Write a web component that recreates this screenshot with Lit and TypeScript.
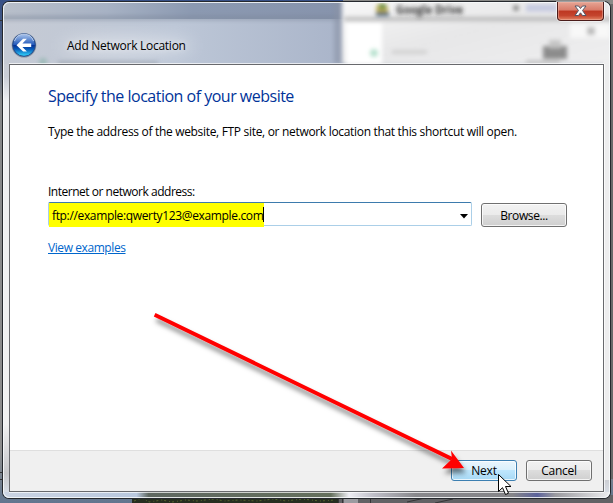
import { LitElement, html, css } from "lit";
import { customElement } from "lit/decorators.js";

@customElement("app-root")
export class AppRoot extends LitElement {
  static styles = css`
    :host {
      display: block;
      position: relative;
      width: 613px;
      height: 503px;
      overflow: hidden;
      font-family: "Open Sans", "Noto Sans", sans-serif;
      font-size: 12px;
      color: #000;
    }
    * { box-sizing: border-box; }
    svg { display: block; }
    .backdrop, .arrow { position: absolute; left: 0; top: 0; pointer-events: none; }
    .window {
      position: relative;
      width: 607px;
      height: 496px;
      margin: 2px 0 0 3px;
      display: flex;
      flex-direction: column;
      padding: 0 6px;
    }
    .bar { height: 62px; display: flex; align-items: flex-start; }
    .back { margin: 30px 0 0 2px; }
    .title {
      margin: 35px 0 0 30px;
      line-height: 18px;
      letter-spacing: -0.27px;
      white-space: nowrap;
      text-shadow: 0 0 6px #ffffffb0;
    }
    .close {
      margin: 0 0 0 auto;
      padding: 0;
      width: 47px;
      height: 19px;
      border: 1px solid #4b1c1a;
      border-top: 0;
      border-radius: 0 0 4px 4px;
      background: linear-gradient(#e6a595 0, #d87b69 45%, #bd3722 50%, #c4442d 75%, #e28263 100%);
      box-shadow: inset 0 0 0 1px #f0b7a880, 0 0 0 1px #ffffff90;
      display: flex;
      justify-content: center;
      padding-top: 3px;
    }
    .client {
      height: 428px;
      border: 1px solid #68696d;
      background: #fff;
      display: flex;
      flex-direction: column;
    }
    .page { flex: 1; padding: 19px 35px 0 38px; display: flex; flex-direction: column; align-items: flex-start; }
    h1 { margin: 0; font-size: 16px; font-weight: 400; line-height: 24px; color: #003399; white-space: nowrap; letter-spacing: -0.5px; }
    .desc { margin: 15px 0 0; line-height: 18px; white-space: nowrap; letter-spacing: -0.315px; }
    label { margin-top: 42px; line-height: 18px; white-space: nowrap; letter-spacing: -0.48px; }
    .row { display: flex; align-items: flex-start; gap: 9px; margin-top: 1px; }
    .combo {
      width: 424px;
      height: 24px;
      border: 1px solid #abcfe8;
      border-top-color: #3d7bad;
      border-radius: 2px;
      display: flex;
      align-items: flex-start;
      justify-content: space-between;
    }
    .value {
      width: 215px;
      height: 24px;
      padding-left: 3px;
      line-height: 25px;
      background: #ff0;
      white-space: nowrap;
      letter-spacing: -0.35px;
      position: relative;
    }
    .caret { position: absolute; right: 0; top: 4px; width: 1px; height: 15px; background: #000; }
    .drop { margin: 11px 3px 0 0; }
    button { font: inherit; color: #000; }
    .btn {
      padding: 0;
      border: 1px solid #707070;
      border-radius: 3px;
      background: linear-gradient(#f2f2f2 0, #ebebeb 48%, #dddddd 50%, #cfcfcf 100%);
      box-shadow: inset 0 0 0 1px #ffffffc0;
      width: 66px;
      height: 21px;
      line-height: 20px;
      text-align: center;
      letter-spacing: -0.25px;
    }
    .browse { width: 86px; height: 24px; line-height: 23px; margin-top: 1px; letter-spacing: -0.4px; }
    .next {
      border-color: #3c7fb1;
      background: linear-gradient(#eaf6fd 0, #d9f0fc 48%, #bee6fd 50%, #a7d9f5 100%);
    }
    .link { margin-top: 12px; line-height: 18px; color: #0066cc; text-decoration: underline; letter-spacing: -0.42px; white-space: nowrap; }
    .footer {
      height: 41px;
      border-top: 1px solid #dfdfdf;
      background: #f0f0f0;
      display: flex;
      justify-content: flex-end;
      gap: 9px;
      padding: 9px 11px 0 0;
    }
  `;

  private backdrop() {
    return html`<svg class="backdrop" width="613" height="503" viewBox="0 0 613 503">
      <defs>
        <filter id="soft" x="-20%" y="-50%" width="140%" height="200%"><feGaussianBlur stdDeviation="2" /></filter>
        <filter id="edge" filterUnits="userSpaceOnUse" x="-20" y="-20" width="660" height="120"><feGaussianBlur stdDeviation="2" /></filter>
        <filter id="wide" x="-20%" y="-60%" width="140%" height="220%"><feGaussianBlur stdDeviation="8" /></filter>
        <clipPath id="frame"><rect x="3" y="2" width="607" height="496" rx="6" /></clipPath>
        <linearGradient id="desk" x1="0" y1="0" x2="0" y2="1">
          <stop offset="0" stop-color="#365087" /><stop offset=".12" stop-color="#56647f" />
          <stop offset=".2" stop-color="#858789" /><stop offset=".9" stop-color="#8d8d8d" />
          <stop offset="1" stop-color="#61758f" />
        </linearGradient>
        <linearGradient id="top" x1="0" x2="1">
          <stop offset="0" stop-color="#b8bfca" /><stop offset=".3" stop-color="#a7b2c4" />
          <stop offset=".55" stop-color="#8b99b1" /><stop offset="1" stop-color="#8693ac" />
        </linearGradient>
        <linearGradient id="lower" x1="0" x2="1">
          <stop offset="0" stop-color="#c5cad4" /><stop offset=".5" stop-color="#bdc7d7" />
          <stop offset="1" stop-color="#a9b4c9" />
        </linearGradient>
        <linearGradient id="side" x1="0" y1="0" x2="0" y2="1">
          <stop offset="0" stop-color="#c5cad4" /><stop offset=".15" stop-color="#c9cdd6" /><stop offset=".2" stop-color="#eeeff1" />
          <stop offset=".85" stop-color="#f1f1f1" /><stop offset=".95" stop-color="#c7c7ca" />
          <stop offset="1" stop-color="#dce3ed" />
        </linearGradient>
        <linearGradient id="base" x1="0" x2="1">
          <stop offset="0" stop-color="#cbd4e3" /><stop offset=".22" stop-color="#b9c8de" />
          <stop offset=".24" stop-color="#5f6861" /><stop offset=".54" stop-color="#65705d" />
          <stop offset=".57" stop-color="#eeeef4" /><stop offset=".61" stop-color="#bfbfc9" />
          <stop offset=".68" stop-color="#88888c" /><stop offset=".84" stop-color="#858589" />
          <stop offset=".88" stop-color="#5b629b" /><stop offset=".91" stop-color="#9b9ba0" />
          <stop offset="1" stop-color="#ededf0" />
        </linearGradient>
        <linearGradient id="grey" x1="0" y1="0" x2="1" y2="1">
          <stop offset="0" stop-color="#fafafa" /><stop offset=".5" stop-color="#e7e7e8" /><stop offset="1" stop-color="#efeff0" />
        </linearGradient>
      </defs>
      <rect width="613" height="503" fill="url(#desk)" />
      <rect x="343" width="270" height="6" fill="#8a8a88" />
      <path d="M0 20.500H3M0 472.500H3M0 479.500H3" stroke="#333" />
      <rect x="609" y="4" width="4" height="475" fill="#696969" />
      <rect x="132" y="495" width="206" height="8" fill="#262e20" />
      <path d="M134 501l8-3 7 4 13-2 10 2 14-2 11 1 17-2 10 2 15-1 18 1 17-2 12 2 16-2 18 2 16-1" fill="none" stroke="#55632e" stroke-dasharray="2 3 1 2" />
      <rect x="338" y="495" width="275" height="8" fill="#626265" />
      <rect x="344" y="498" width="14" height="5" fill="#9b9ba0" />
      <path d="M338.500 498v5M342.500 498v5M370.500 498v5M407 502l18-4m10 5l18-4" stroke="#353537" />
      <rect x="2" y="1" width="609" height="498" rx="7" fill="#25282d" />
      <g clip-path="url(#frame)">
        <rect x="3" y="2" width="607" height="496" fill="url(#side)" />
        <rect x="603" y="60" width="7" height="420" fill="#ededee" />
        <rect x="3" y="2" width="345" height="18" fill="url(#top)" />
        <rect x="3" y="19" width="345" height="45" fill="url(#lower)" />
        <rect x="-10" y="16" width="355" height="4" fill="#7c8698" opacity=".55" filter="url(#edge)" />
        <rect x="334" y="-10" width="12" height="74" fill="#8992a5" opacity=".6" filter="url(#edge)" />
        <rect x="342" y="-10" width="290" height="74" fill="url(#grey)" filter="url(#edge)" />
        <rect x="346" y="22" width="36" height="42" fill="#fff" filter="url(#edge)" />
        <rect x="344" y="17" width="270" height="4" fill="#aaa" opacity=".75" filter="url(#edge)" />
        <g filter="url(#edge)">
          <circle cx="382" cy="9" r="6" fill="#c3b053" />
          <path d="M376 12h13v4h-13z" fill="#445f72" />
          <path d="M379 4h7v5h-7z" fill="#63934c" />
          <path d="M526 8H557" stroke="#c5c9e0" stroke-width="7" />
          <circle cx="516" cy="8" r="3" fill="#888" />
          <circle cx="374" cy="53" r="4" fill="#b8e2cf" />
          <path d="M392 52h35" stroke="#d2d2d2" stroke-width="4" />
          <rect x="543" y="46" width="24" height="13" fill="#8c8c8c" />
          <rect x="549" y="40" width="12" height="8" fill="#c5c5c5" />
          <path d="M526 62h34" stroke="#bbb" stroke-width="3" />
          <rect x="570" y="24" width="40" height="14" fill="#f8f8f8" />
          <rect x="587" y="27" width="8" height="8" fill="#bbb" />
          <path d="M58 63h100" stroke="#9ca4b0" stroke-width="3" />
          <circle cx="43" cy="62" r="4" fill="#9dbab8" />
        </g>
        <g font-size="12" filter="url(#soft)">
          <text x="396" y="14" font-weight="700" fill="#333" textLength="67" lengthAdjust="spacingAndGlyphs">Google Drive</text>
        </g>
        <ellipse cx="127" cy="46" rx="66" ry="9" fill="#fff" opacity=".4" filter="url(#wide)" />
        <rect x="3" y="492" width="607" height="6" fill="url(#base)" />
      </g>
      <rect x="3.500" y="2.500" width="606" height="495" rx="6" fill="none" stroke="#f8fafc" stroke-opacity=".85" />
      <path d="M9 63.500H604M604.500 64V492M9 492.500H604" stroke="#fff" stroke-opacity=".7" />
    </svg>`;
  }

  render() {
    return html`
      ${this.backdrop()}
      <main class="window">
        <header class="bar">
          <svg class="back" width="26" height="26" viewBox="0 0 26 26" aria-label="Back">
            <defs>
              <linearGradient id="ball" x1="0" y1="0" x2="0" y2="1">
                <stop offset="0" stop-color="#b1c9ee" /><stop offset=".25" stop-color="#668fd2" />
                <stop offset=".48" stop-color="#245abc" /><stop offset=".5" stop-color="#062e91" />
                <stop offset=".68" stop-color="#075ab9" /><stop offset="1" stop-color="#35dcff" />
              </linearGradient>
            </defs>
            <circle cx="13" cy="13.300" r="12.300" fill="#647186" opacity=".65" />
            <circle cx="13" cy="13" r="11.300" fill="url(#ball)" stroke="#234a8c" stroke-width="1" />
            <path d="M3.500 9a10 10 0 0 1 19 0" fill="none" stroke="#dce8fb" opacity=".75" />
            <path d="M5.500 13.200l6.600-6.400h3.800l-4.500 4.600h8.800v3.600h-8.800l4.500 4.600h-3.800z" fill="#fff" />
          </svg>
          <div class="title">Add Network Location</div>
          <button class="close" aria-label="Close">
            <svg width="13" height="12" viewBox="0 0 13 12">
              <path d="M1 1h3.500l2 2.500 2-2.500H12L8.500 5.500 12 10.500H8.500l-2-2.700-2 2.700H1L4.500 5.500z" fill="#fff" stroke="#535666" stroke-linejoin="round" />
            </svg>
          </button>
        </header>
        <section class="client">
          <div class="page">
            <h1>Specify the location of your website</h1>
            <p class="desc">Type the address of the website, FTP site, or network location that this shortcut will open.</p>
            <label>Internet or network address:</label>
            <div class="row">
              <div class="combo">
                <div class="value">ftp://example:qwerty123@example.com<span class="caret"></span></div>
                <svg class="drop" width="8" height="5" viewBox="0 0 8 5"><path d="M0 0h8L4 4.500z" fill="#000" /></svg>
              </div>
              <button class="btn browse">Browse...</button>
            </div>
            <a class="link">View examples</a>
          </div>
          <footer class="footer">
            <button class="btn next">Next</button>
            <button class="btn">Cancel</button>
          </footer>
        </section>
      </main>
      <svg class="arrow" width="613" height="503" viewBox="0 0 613 503">
        <defs>
          <filter id="shade" x="-10%" y="-10%" width="120%" height="120%">
            <feDropShadow dx="2" dy="5" stdDeviation="2.5" flood-color="#000" flood-opacity=".5" />
          </filter>
        </defs>
        <g filter="url(#shade)" fill="#f00">
          <path d="M155.500 313L453 457.200 451.200 460.800 153.800 316.500z" />
          <path d="M451 450.500L464 468 442 468.500 452 459z" />
        </g>
        <path d="M498.500 474.500v17l4-3.800 3 6.800 3-1.300-3-6.700h5.500z" fill="#fff" stroke="#000" />
      </svg>
    `;
  }
}
